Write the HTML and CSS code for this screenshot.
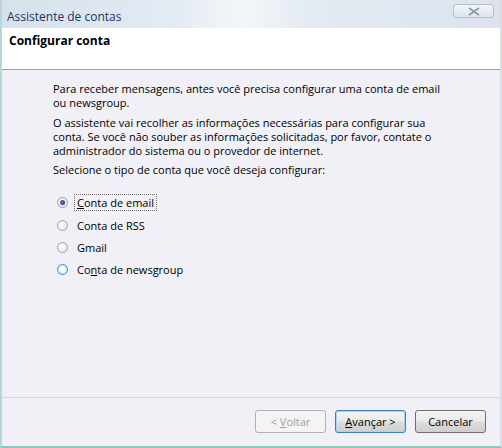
FILE: index.html
```html
<!DOCTYPE html>
<html>
<head>
<meta charset="utf-8">
<link rel="stylesheet" href="styles.css">
</head>
<body>
<div class="window">
  <div class="titlebar">
    <span class="title">Assistente de contas</span>
    <span class="close"><svg width="14" height="9" viewBox="0 0 14 9"><path d="M2 1 L12 8 M12 1 L2 8" stroke="#8a96a3" stroke-width="1.6" fill="none"/></svg></span>
  </div>
  <div class="header">Configurar conta</div>
  <div class="content">
    <p class="para">Para receber mensagens, antes você precisa configurar uma conta de email ou newsgroup.</p>
    <p class="para">O assistente vai recolher as informações necessárias para configurar sua conta. Se você não souber as informações solicitadas, por favor, contate o administrador do sistema ou o provedor de internet.</p>
    <p class="para">Selecione o tipo de conta que você deseja configurar:</p>
    <div class="options">
      <div class="opt"><span class="radio checked"></span><span class="lbl focus"><u>C</u>onta de email</span></div>
      <div class="opt"><span class="radio"></span><span class="lbl">Conta de RSS</span></div>
      <div class="opt"><span class="radio"></span><span class="lbl">Gmail</span></div>
      <div class="opt"><span class="radio hover"></span><span class="lbl">Co<u>n</u>ta de newsgroup</span></div>
    </div>
  </div>
  <div class="footer">
    <button class="btn disabled">&lt; <u>V</u>oltar</button>
    <button class="btn default"><u>A</u>vançar &gt;</button>
    <button class="btn">Cancelar</button>
  </div>
</div>
</body>
</html>
```
FILE: styles.css
```css
html, body { margin: 0; padding: 0; }
body { width: 502px; height: 448px; overflow: hidden; font-family: "Open Sans", "Noto Sans", sans-serif; font-size: 11px; color: #000; }
.window {
  width: 502px; height: 448px; box-sizing: border-box;
  display: flex; flex-direction: column;
  background: #f0f0f6;
  border-left: 2px solid #b9d4dc;
  border-right: 2px solid #d8dde3;
  border-bottom: 2px solid #8fc8bb;
}
.titlebar {
  height: 28px; flex: none; position: relative;
  background: linear-gradient(90deg, #d6e1ec 0%, #e3ebf3 35%, #f4f7fa 48%, #e3eaf2 62%, #dbe4ee 100%);
  display: flex; align-items: center;
}
.title { color: #1e3463; font-size: 12px; padding-left: 5px; padding-top: 4px; }
.close {
  position: absolute; right: 6px; top: 4px; width: 41px; height: 14px;
  box-sizing: border-box; border: 1px solid #b7bfc8; border-radius: 3px;
  background: linear-gradient(#f3f5f8, #dfe4ea);
  display: flex; align-items: center; justify-content: center;
}
.header {
  height: 42px; flex: none; box-sizing: border-box;
  background: #fff; border-bottom: 1px solid #a0a0a0;
  font-weight: bold; font-size: 12px; padding: 4px 0 0 7px;
}
.content { flex: 1; padding: 12px 0 0 51px; }
.para { margin: 0 0 6px 0; width: 400px; line-height: 14px; }
.para:nth-child(3) { margin-top: -1px; }
.options { margin-top: 17px; display: flex; flex-direction: column; gap: 6px; }
.opt { display: flex; align-items: center; height: 16px; }
.opt:nth-child(2) { margin-top: 1px; }
.radio {
  width: 11px; height: 11px; border-radius: 50%; box-sizing: border-box;
  border: 1px solid #9aa4ae; background: radial-gradient(circle at 40% 40%, #ffffff, #e2e5ea 80%);
  margin: 0 6px 0 4px; position: relative; flex: none;
}
.radio.checked::after {
  content: ""; position: absolute; left: 2px; top: 2px; width: 5px; height: 5px; border-radius: 50%;
  background: radial-gradient(circle at 40% 40%, #6a72c8, #1a2470);
}
.radio.hover { border-color: #3c8fc4; background: radial-gradient(circle, #ffffff 30%, #b4dcf2 90%); }
.lbl { padding: 0 2px; border: 1px dotted transparent; }
.lbl.focus { border-color: #707070; }
.footer {
  height: 49px; flex: none; box-sizing: border-box;
  border-top: 1px solid #d6d6d6;
  display: flex; justify-content: flex-end; align-items: flex-start;
  padding: 12px 14px 0 0; gap: 9px;
}
.btn {
  width: 71px; height: 23px; box-sizing: border-box;
  font-family: inherit; font-size: 11px; color: #000;
  border: 1px solid #707070; border-radius: 3px;
  background: linear-gradient(#f2f2f2 0%, #ebebeb 48%, #dddddd 52%, #cfcfcf 100%);
  padding: 0;
}
.btn.default { border-color: #3c7fb1; box-shadow: inset 0 0 0 1px #a5d5f0; }
.btn.disabled { color: #a0a0a0; border-color: #adb2b5; background: #f4f4f4; }
```
